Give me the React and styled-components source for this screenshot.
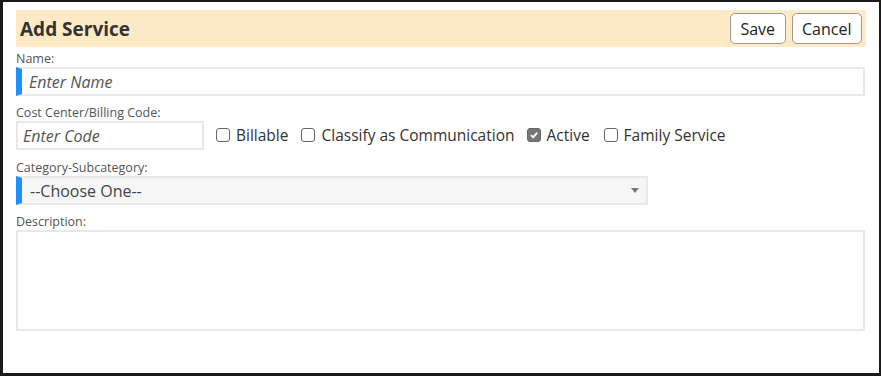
import React from "react"
import styled, { createGlobalStyle } from "styled-components"

const GlobalStyle = createGlobalStyle`
  html, body {
    margin: 0;
    padding: 0;
    background: #ffffff;
  }
  body {
    font-family: "Open Sans", "Noto Sans", sans-serif;
    color: #333;
  }
`

const Frame = styled.div`
  box-sizing: border-box;
  width: 881px;
  height: 376px;
  border-style: solid;
  border-color: #1a1a1a;
  border-width: 2px 2px 3px 3px;
  background: #fff;
  padding: 8px 13px 0 13px;
  display: flex;
  flex-direction: column;
`

const Header = styled.div`
  display: flex;
  align-items: center;
  justify-content: space-between;
  background: #feeac6;
  height: 37px;
  padding: 0 4px 0 4px;
`

const Title = styled.h2`
  margin: 0;
  font-size: 19px;
  font-weight: 700;
  color: #333;
`

const Actions = styled.div`
  display: flex;
  gap: 6px;
`

const Button = styled.button`
  font-family: inherit;
  font-size: 16px;
  color: #222;
  background: #fff;
  border: 1px solid #999;
  border-radius: 5px;
  height: 31px;
  padding: 0 9.5px;
  cursor: pointer;
`

const Label = styled.div`
  font-size: 12.5px;
  color: #555;
  margin-top: ${(p) => p.$top || 0}px;
  line-height: 13px;
`

const Field = styled.div`
  box-sizing: border-box;
  display: flex;
  align-items: center;
  width: ${(p) => p.$width || "849px"};
  height: 29px;
  border: 2px solid #e8e8e8;
  border-left: ${(p) => (p.$required ? "6px solid #1e90ff" : "2px solid #e8e8e8")};
  background: ${(p) => p.$bg || "#fff"};
  padding-left: ${(p) => p.$pad || 7}px;
  margin-top: 2px;
  position: relative;
`

const Placeholder = styled.span`
  font-size: 16px;
  font-style: italic;
  color: #555;
`

const SelectText = styled.span`
  font-size: 16px;
  color: #444;
`

const Caret = styled.span`
  position: absolute;
  right: 7px;
  top: 10px;
  width: 0;
  height: 0;
  border-left: 4.5px solid transparent;
  border-right: 4.5px solid transparent;
  border-top: 5px solid #777;
`

const Row = styled.div`
  display: flex;
  align-items: center;
`

const Check = styled.label`
  display: flex;
  align-items: center;
  gap: 6px;
  font-size: 15.5px;
  color: #333;
  margin-left: ${(p) => p.$gap}px;
`

const Box = styled.span`
  box-sizing: border-box;
  width: 14px;
  height: 14px;
  border: 1px solid #666;
  border-radius: 3px;
  background: ${(p) => (p.$on ? "#767676" : "#fff")};
  display: flex;
  align-items: center;
  justify-content: center;
`

const TextArea = styled.div`
  box-sizing: border-box;
  width: 849px;
  height: 101px;
  border: 2px solid #e8e8e8;
  margin-top: 2px;
`

const CheckItem = ({ label, on, gap }) => (
  <Check $gap={gap}>
    <Box $on={on}>
      {on && (
        <svg width="10" height="10" viewBox="0 0 10 10">
          <path d="M2 5.2 L4.2 7.4 L8.2 2.6" fill="none" stroke="#fff" strokeWidth="1.8" />
        </svg>
      )}
    </Box>
    {label}
  </Check>
)

export default function App() {
  return (
    <>
      <GlobalStyle />
      <Frame>
        <Header>
          <Title>Add Service</Title>
          <Actions>
            <Button>Save</Button>
            <Button>Cancel</Button>
          </Actions>
        </Header>

        <Label $top={5}>Name:</Label>
        <Field $required $pad={7}>
          <Placeholder>Enter Name</Placeholder>
        </Field>

        <Label $top={10}>Cost Center/Billing Code:</Label>
        <Row>
          <Field $width="188px" $pad={5}>
            <Placeholder>Enter Code</Placeholder>
          </Field>
          <CheckItem label="Billable" gap={12} />
          <CheckItem label="Classify as Communication" gap={13} />
          <CheckItem label="Active" on gap={12} />
          <CheckItem label="Family Service" gap={14} />
        </Row>

        <Label $top={11}>Category-Subcategory:</Label>
        <Field $required $width="632px" $bg="#f6f6f6" $pad={8}>
          <SelectText>--Choose One--</SelectText>
          <Caret />
        </Field>

        <Label $top={10}>Description:</Label>
        <TextArea />
      </Frame>
    </>
  )
}
